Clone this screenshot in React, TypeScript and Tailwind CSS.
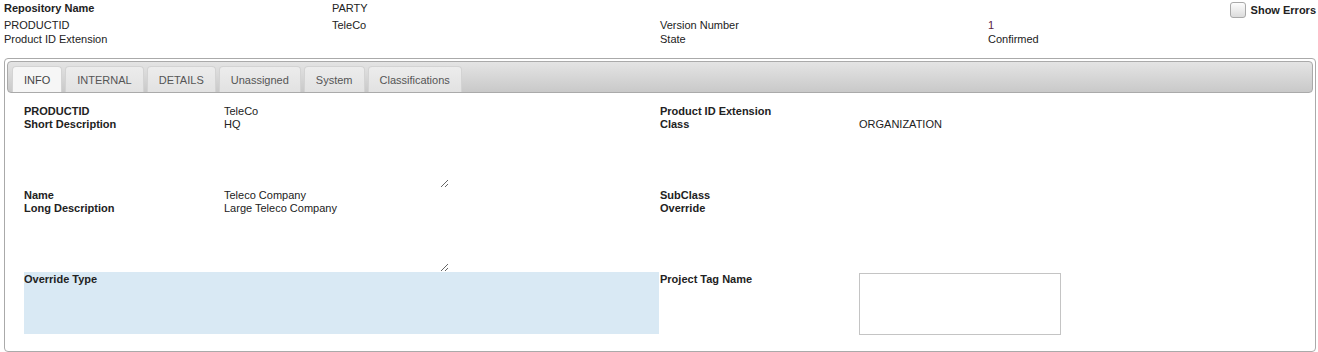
import { useState } from 'react';

const tabs = ['INFO', 'INTERNAL', 'DETAILS', 'Unassigned', 'System', 'Classifications'];

const App = () => {
    // which tab is selected
    const [active, setActive] = useState('INFO');
    const [showErrors, setShowErrors] = useState(false);

    return (
        <div className="w-[1318px] h-[352px] bg-white text-[11px] text-[#222] font-['Liberation_Sans',Arial,sans-serif] overflow-hidden">
            {/* Header info */}
            <div className="flex items-start">
                <div className="flex-1 grid grid-cols-[328px_328px_328px_1fr] pl-[4px] pt-[2px]">
                    <div className="font-bold leading-[13px]">Repository Name</div>
                    <div className="leading-[13px]">PARTY</div>
                    <div></div>
                    <div></div>

                    <div className="mt-[3px] leading-[14px]">
                        <div>PRODUCTID</div>
                        <div>Product ID Extension</div>
                    </div>
                    <div className="mt-[3px] leading-[14px]">
                        <div>TeleCo</div>
                    </div>
                    <div className="mt-[3px] leading-[14px]">
                        <div>Version Number</div>
                        <div>State</div>
                    </div>
                    <div className="mt-[3px] leading-[14px]">
                        <div className="text-[#5a1d45]">1</div>
                        <div>Confirmed</div>
                    </div>
                </div>

                {/* Show Errors checkbox */}
                <label className="flex items-center gap-[5px] pt-[2px] pr-[2px] cursor-pointer">
                    <span
                        onClick={() => setShowErrors(!showErrors)}
                        className="w-[16px] h-[16px] rounded-[3px] border border-[#a9a9a9] bg-gradient-to-b from-[#fdfdfd] to-[#dcdcdc] flex items-center justify-center text-[10px]"
                    >
                        {showErrors ? '✓' : ''}
                    </span>
                    <span className="font-bold">Show Errors</span>
                </label>
            </div>

            {/* Main panel */}
            <div className="mt-[12px] ml-[4px] mr-[2px] h-[294px] border border-[#aaa] rounded-[4px] p-[2px]">
                {/* Tab bar */}
                <div className="h-[32px] border border-[#aaa] rounded-[4px] bg-gradient-to-b from-[#e4e4e4] to-[#c9c9c9] flex items-end gap-[3px] pl-[4px]">
                    {tabs.map((t) => (
                        <button
                            key={t}
                            onClick={() => setActive(t)}
                            className={
                                t === active
                                    ? 'h-[26px] px-[11px] border border-b-0 border-[#d3d3d3] rounded-t-[4px] bg-[#f6f6f6] text-[#444] leading-[24px]'
                                    : 'h-[26px] px-[11px] border border-b-0 border-[#d3d3d3] rounded-t-[4px] bg-gradient-to-b from-[#ececec] to-[#e2e2e2] text-[#555] leading-[24px]'
                            }
                        >
                            {t}
                        </button>
                    ))}
                </div>

                {/* Form content */}
                <div className="grid grid-cols-[200px_436px_199px_1fr] pl-[17px] pt-[12px] leading-[13px]">
                    {/* section 1 */}
                    <div className="font-bold">PRODUCTID</div>
                    <div>TeleCo</div>
                    <div className="font-bold">Product ID Extension</div>
                    <div></div>

                    <div className="font-bold">Short Description</div>
                    <div>
                        <textarea
                            defaultValue="HQ"
                            className="block w-[225px] h-[70px] p-0 border-0 outline-none resize bg-transparent leading-[13px] text-[11px]"
                        />
                    </div>
                    <div className="font-bold">Class</div>
                    <div>ORGANIZATION</div>

                    {/* section 2 */}
                    <div className="font-bold mt-[1px]">Name</div>
                    <div className="mt-[1px]">Teleco Company</div>
                    <div className="font-bold mt-[1px]">SubClass</div>
                    <div className="mt-[1px]"></div>

                    <div className="font-bold">Long Description</div>
                    <div>
                        <textarea
                            defaultValue="Large Teleco Company"
                            className="block w-[225px] h-[70px] p-0 border-0 outline-none resize bg-transparent leading-[13px] text-[11px]"
                        />
                    </div>
                    <div className="font-bold">Override</div>
                    <div></div>

                    {/* section 3 */}
                    <div className="col-span-2 h-[62px] bg-[#d9e9f4] font-bold pt-[1px] mr-[1px]">Override Type</div>
                    <div className="font-bold pt-[1px]">Project Tag Name</div>
                    <div className="mt-[1px]">
                        <textarea className="block w-[202px] h-[62px] border border-[#c4c4c4] outline-none resize-none bg-white text-[11px]" />
                    </div>
                </div>
            </div>
        </div>
    );
};

export default App;
